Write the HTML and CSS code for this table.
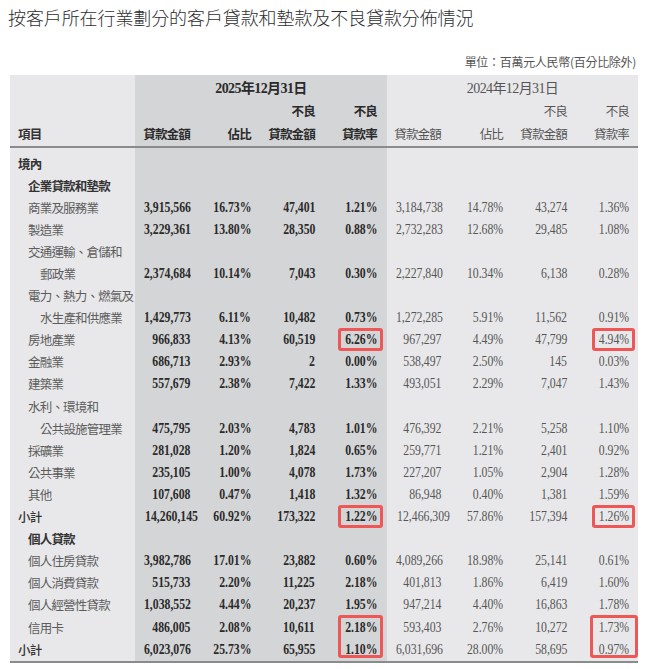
FILE: index.html
```html
<!DOCTYPE html>
<html lang="zh-Hant">
<head>
<meta charset="utf-8">
<title>客戶貸款分佈</title>
<link rel="stylesheet" href="styles.css">
</head>
<body>
<div class="page">
  <h1 class="title">按客戶所在行業劃分的客戶貸款和墊款及不良貸款分佈情況</h1>
  <p class="unit">單位：百萬元人民幣(百分比除外)</p>
  <table class="dist">
    <colgroup>
      <col class="c-label c1">
      <col class="c-cur c2"><col class="c-cur c3"><col class="c-cur c4"><col class="c-cur c5">
      <col class="c-prev c6"><col class="c-prev c7"><col class="c-prev c8"><col class="c-prev c9">
    </colgroup>
    <thead>
      <tr class="h1">
        <th></th>
        <th colspan="4" class="date cur">2025年12月31日</th>
        <th colspan="4" class="date prev">2024年12月31日</th>
      </tr>
      <tr class="h2">
        <th></th><th></th><th></th>
        <th class="cur">不良</th><th class="cur rl">不良</th>
        <th></th><th></th>
        <th class="prev">不良</th><th class="prev rr">不良</th>
      </tr>
      <tr class="h3">
        <th class="lab">項目</th>
        <th class="cur">貸款金額</th><th class="cur">佔比</th><th class="cur">貸款金額</th><th class="cur rl">貸款率</th>
        <th class="prev">貸款金額</th><th class="prev">佔比</th><th class="prev">貸款金額</th><th class="prev rr">貸款率</th>
      </tr>
    </thead>
    <tbody>
      <tr><td class="lab l0 strong">境內</td><td></td><td></td><td></td><td></td><td></td><td></td><td></td><td></td></tr>
      <tr><td class="lab l1 strong">企業貸款和墊款</td><td></td><td></td><td></td><td></td><td></td><td></td><td></td><td></td></tr>
      <tr><td class="lab l1">商業及服務業</td><td class="n cur"><span>3,915,566</span></td><td class="n cur"><span>16.73%</span></td><td class="n cur"><span>47,401</span></td><td class="n cur rl"><span>1.21%</span></td><td class="n prev"><span>3,184,738</span></td><td class="n prev"><span>14.78%</span></td><td class="n prev"><span>43,274</span></td><td class="n prev rr"><span>1.36%</span></td></tr>
      <tr><td class="lab l1">製造業</td><td class="n cur"><span>3,229,361</span></td><td class="n cur"><span>13.80%</span></td><td class="n cur"><span>28,350</span></td><td class="n cur rl"><span>0.88%</span></td><td class="n prev"><span>2,732,283</span></td><td class="n prev"><span>12.68%</span></td><td class="n prev"><span>29,485</span></td><td class="n prev rr"><span>1.08%</span></td></tr>
      <tr><td class="lab l1">交通運輸、倉儲和</td><td></td><td></td><td></td><td></td><td></td><td></td><td></td><td></td></tr>
      <tr><td class="lab l2">郵政業</td><td class="n cur"><span>2,374,684</span></td><td class="n cur"><span>10.14%</span></td><td class="n cur"><span>7,043</span></td><td class="n cur rl"><span>0.30%</span></td><td class="n prev"><span>2,227,840</span></td><td class="n prev"><span>10.34%</span></td><td class="n prev"><span>6,138</span></td><td class="n prev rr"><span>0.28%</span></td></tr>
      <tr><td class="lab l1">電力、熱力、燃氣及</td><td></td><td></td><td></td><td></td><td></td><td></td><td></td><td></td></tr>
      <tr><td class="lab l2">水生產和供應業</td><td class="n cur"><span>1,429,773</span></td><td class="n cur"><span>6.11%</span></td><td class="n cur"><span>10,482</span></td><td class="n cur rl"><span>0.73%</span></td><td class="n prev"><span>1,272,285</span></td><td class="n prev"><span>5.91%</span></td><td class="n prev"><span>11,562</span></td><td class="n prev rr"><span>0.91%</span></td></tr>
      <tr><td class="lab l1">房地產業</td><td class="n cur"><span>966,833</span></td><td class="n cur"><span>4.13%</span></td><td class="n cur"><span>60,519</span></td><td class="n cur rl hl hl-a"><span>6.26%</span></td><td class="n prev"><span>967,297</span></td><td class="n prev"><span>4.49%</span></td><td class="n prev"><span>47,799</span></td><td class="n prev rr hl hl-b"><span>4.94%</span></td></tr>
      <tr><td class="lab l1">金融業</td><td class="n cur"><span>686,713</span></td><td class="n cur"><span>2.93%</span></td><td class="n cur"><span>2</span></td><td class="n cur rl"><span>0.00%</span></td><td class="n prev"><span>538,497</span></td><td class="n prev"><span>2.50%</span></td><td class="n prev"><span>145</span></td><td class="n prev rr"><span>0.03%</span></td></tr>
      <tr><td class="lab l1">建築業</td><td class="n cur"><span>557,679</span></td><td class="n cur"><span>2.38%</span></td><td class="n cur"><span>7,422</span></td><td class="n cur rl"><span>1.33%</span></td><td class="n prev"><span>493,051</span></td><td class="n prev"><span>2.29%</span></td><td class="n prev"><span>7,047</span></td><td class="n prev rr"><span>1.43%</span></td></tr>
      <tr><td class="lab l1">水利、環境和</td><td></td><td></td><td></td><td></td><td></td><td></td><td></td><td></td></tr>
      <tr><td class="lab l2">公共設施管理業</td><td class="n cur"><span>475,795</span></td><td class="n cur"><span>2.03%</span></td><td class="n cur"><span>4,783</span></td><td class="n cur rl"><span>1.01%</span></td><td class="n prev"><span>476,392</span></td><td class="n prev"><span>2.21%</span></td><td class="n prev"><span>5,258</span></td><td class="n prev rr"><span>1.10%</span></td></tr>
      <tr><td class="lab l1">採礦業</td><td class="n cur"><span>281,028</span></td><td class="n cur"><span>1.20%</span></td><td class="n cur"><span>1,824</span></td><td class="n cur rl"><span>0.65%</span></td><td class="n prev"><span>259,771</span></td><td class="n prev"><span>1.21%</span></td><td class="n prev"><span>2,401</span></td><td class="n prev rr"><span>0.92%</span></td></tr>
      <tr><td class="lab l1">公共事業</td><td class="n cur"><span>235,105</span></td><td class="n cur"><span>1.00%</span></td><td class="n cur"><span>4,078</span></td><td class="n cur rl"><span>1.73%</span></td><td class="n prev"><span>227,207</span></td><td class="n prev"><span>1.05%</span></td><td class="n prev"><span>2,904</span></td><td class="n prev rr"><span>1.28%</span></td></tr>
      <tr><td class="lab l1">其他</td><td class="n cur"><span>107,608</span></td><td class="n cur"><span>0.47%</span></td><td class="n cur"><span>1,418</span></td><td class="n cur rl"><span>1.32%</span></td><td class="n prev"><span>86,948</span></td><td class="n prev"><span>0.40%</span></td><td class="n prev"><span>1,381</span></td><td class="n prev rr"><span>1.59%</span></td></tr>
      <tr><td class="lab l0 sub">小計</td><td class="n cur"><span>14,260,145</span></td><td class="n cur"><span>60.92%</span></td><td class="n cur"><span>173,322</span></td><td class="n cur rl hl hl-a"><span>1.22%</span></td><td class="n prev"><span>12,466,309</span></td><td class="n prev"><span>57.86%</span></td><td class="n prev"><span>157,394</span></td><td class="n prev rr hl hl-b"><span>1.26%</span></td></tr>
      <tr><td class="lab l1 strong">個人貸款</td><td></td><td></td><td></td><td></td><td></td><td></td><td></td><td></td></tr>
      <tr><td class="lab l1">個人住房貸款</td><td class="n cur"><span>3,982,786</span></td><td class="n cur"><span>17.01%</span></td><td class="n cur"><span>23,882</span></td><td class="n cur rl"><span>0.60%</span></td><td class="n prev"><span>4,089,266</span></td><td class="n prev"><span>18.98%</span></td><td class="n prev"><span>25,141</span></td><td class="n prev rr"><span>0.61%</span></td></tr>
      <tr><td class="lab l1">個人消費貸款</td><td class="n cur"><span>515,733</span></td><td class="n cur"><span>2.20%</span></td><td class="n cur"><span>11,225</span></td><td class="n cur rl"><span>2.18%</span></td><td class="n prev"><span>401,813</span></td><td class="n prev"><span>1.86%</span></td><td class="n prev"><span>6,419</span></td><td class="n prev rr"><span>1.60%</span></td></tr>
      <tr><td class="lab l1">個人經營性貸款</td><td class="n cur"><span>1,038,552</span></td><td class="n cur"><span>4.44%</span></td><td class="n cur"><span>20,237</span></td><td class="n cur rl"><span>1.95%</span></td><td class="n prev"><span>947,214</span></td><td class="n prev"><span>4.40%</span></td><td class="n prev"><span>16,863</span></td><td class="n prev rr"><span>1.78%</span></td></tr>
      <tr><td class="lab l1">信用卡</td><td class="n cur"><span>486,005</span></td><td class="n cur"><span>2.08%</span></td><td class="n cur"><span>10,611</span></td><td class="n cur rl hl hl-a hl-2"><span>2.18%</span></td><td class="n prev"><span>593,403</span></td><td class="n prev"><span>2.76%</span></td><td class="n prev"><span>10,272</span></td><td class="n prev rr hl hl-c hl-2"><span>1.73%</span></td></tr>
      <tr><td class="lab l0 sub">小計</td><td class="n cur"><span>6,023,076</span></td><td class="n cur"><span>25.73%</span></td><td class="n cur"><span>65,955</span></td><td class="n cur rl"><span>1.10%</span></td><td class="n prev"><span>6,031,696</span></td><td class="n prev"><span>28.00%</span></td><td class="n prev"><span>58,695</span></td><td class="n prev rr"><span>0.97%</span></td></tr>
    </tbody>
  </table>
</div>
</body>
</html>
```
FILE: styles.css
```css
html, body {
  margin: 0;
  padding: 0;
  background: #ffffff;
}

body {
  font-family: "Noto Sans CJK TC", "Noto Sans", sans-serif;
  color: #333;
}

.page {
  width: 628px;
  margin-left: 10px;
}

.title {
  margin: 7px 0 0 -2px;
  font-size: 18px;
  line-height: 20px;
  font-weight: 300;
  color: #2e2e2e;
  letter-spacing: -0.1px;
}

.unit {
  margin: 27px 2px 0 0;
  text-align: right;
  font-size: 12px;
  line-height: 16px;
  color: #555;
  letter-spacing: -0.3px;
}

.dist {
  margin-top: 5px;
  width: 628px;
  table-layout: fixed;
  border-collapse: separate;
  border-spacing: 0;
}

col.c-label, col.c-prev { background: #e8e8ea; }
col.c-cur { background: #d4d5d7; }
col.c1 { width: 125px; }
col.c2 { width: 60px; }
col.c3 { width: 61px; }
col.c4 { width: 64px; }
col.c5 { width: 67px; }
col.c6 { width: 59px; }
col.c7 { width: 62px; }
col.c8 { width: 64px; }
col.c9 { width: 66px; }

th, td {
  padding: 0 5px 0 0;
  white-space: nowrap;
  vertical-align: middle;
}

th {
  font-size: 12.5px;
  line-height: 16px;
  text-align: right;
  letter-spacing: -0.8px;
}

th.cur { font-weight: 700; color: #2a2a2a; }
th.prev { font-weight: 400; color: #555; }
th.rl { padding-right: 10px; }
th.rr { padding-right: 9px; }

th.date {
  text-align: center;
  padding-right: 0;
  font-family: "Liberation Serif", "Noto Sans CJK TC", serif;
  font-size: 14px;
  letter-spacing: -0.6px;
}
th.date.cur { font-weight: 700; }

.h1 th { height: 22px; padding-top: 3px; }
.h2 th { height: 22.5px; }
.h3 th { height: 23px; border-bottom: 2px solid #8b8b8b; }

th.lab {
  text-align: left;
  padding-left: 8px;
  font-weight: 700;
  color: #333;
}

td {
  height: 22.1px;
  line-height: 16px;
}

tbody tr:first-child td { padding-top: 5px; }
tbody tr:last-child td { border-bottom: 2px solid #8b8b8b; }

td.lab {
  text-align: left;
  font-size: 12.5px;
  letter-spacing: -0.8px;
  color: #5c5c5c;
}
td.l0 { padding-left: 8px; }
td.l1 { padding-left: 18px; }
td.l2 { padding-left: 30px; }
td.strong { font-weight: 700; color: #333; }
td.sub { font-weight: 500; color: #333; }

td.n {
  text-align: right;
  font-family: "Liberation Serif", "Times New Roman", serif;
  font-size: 14px;
}
td.n span {
  display: inline-block;
  transform: scaleX(0.84);
  transform-origin: right center;
}
td.cur { font-weight: 700; color: #2a2a2a; }
td.prev { font-weight: 400; color: #555; }
td.rl { padding-right: 10px; }
td.rr { padding-right: 9px; }

td.hl { position: relative; }
td.hl::after {
  content: "";
  position: absolute;
  top: -1px;
  bottom: 0;
  border: 3px solid #ef5656;
  border-radius: 3px;
}
td.hl-a::after { left: 18px; right: 4px; }
td.hl-b::after { left: 20px; right: 3px; }
td.hl-c::after { left: 18px; right: 0; }
td.hl-2::after { bottom: -19px; }
```
